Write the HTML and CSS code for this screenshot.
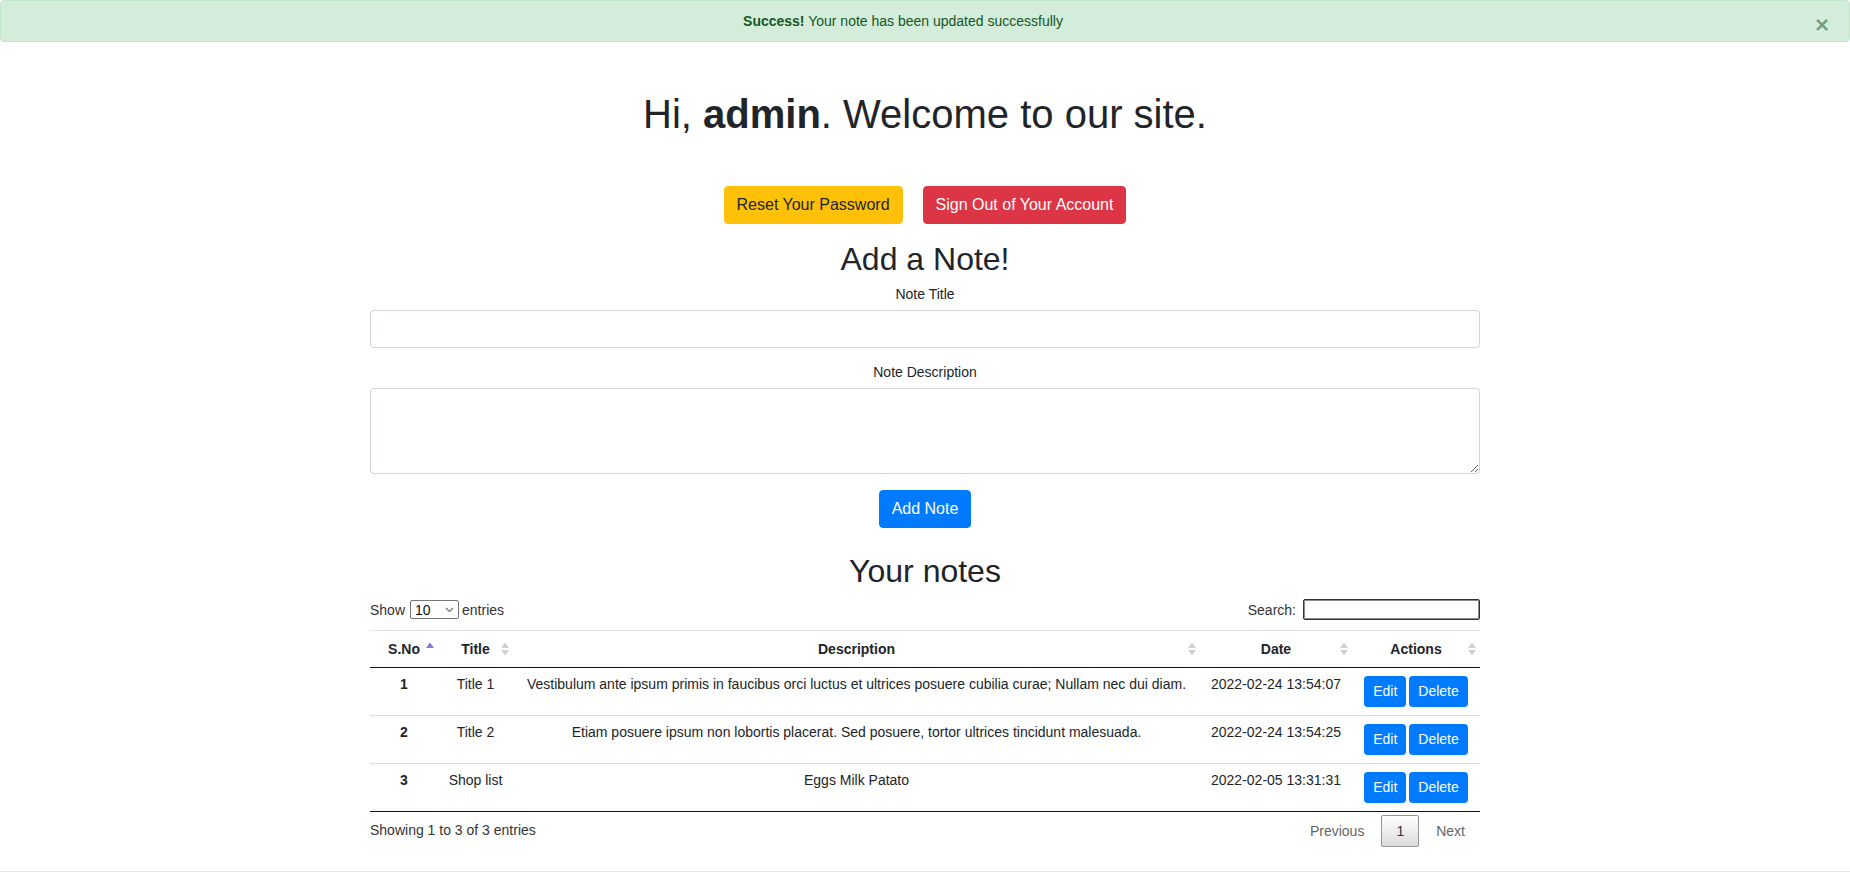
FILE: index.html
```html
<!DOCTYPE html>
<html lang="en">
<head>
<meta charset="utf-8">
<title>Welcome</title>
<link rel="stylesheet" href="styles.css">
</head>
<body>
<div class="alert">
  <strong>Success!</strong> Your note has been updated successfully
  <button type="button" class="close" aria-label="Close">&times;</button>
</div>

<h1 class="greeting">Hi, <b>admin</b>. Welcome to our site.</h1>

<div class="actions">
  <a href="#" class="btn btn-warning">Reset Your Password</a>
  <a href="#" class="btn btn-danger">Sign Out of Your Account</a>
</div>

<div class="container">
  <h2>Add a Note!</h2>
  <form>
    <div class="form-group">
      <label for="title">Note Title</label>
      <input type="text" class="form-control" id="title" name="title">
    </div>
    <div class="form-group">
      <label for="desc">Note Description</label>
      <textarea class="form-control" id="desc" name="description" rows="3"></textarea>
    </div>
    <div class="form-submit">
      <button type="button" class="btn btn-primary">Add Note</button>
    </div>
  </form>
</div>

<div class="container notes">
  <h2>Your notes</h2>
  <div class="dt-top">
    <label class="dt-length"><span>Show</span><span class="select-wrap"><select><option>10</option><option>25</option><option>50</option><option>100</option></select><svg class="chev" width="9" height="6" viewBox="0 0 9 6"><path d="M1 1 L4.5 4.5 L8 1" /></svg></span><span>entries</span></label>
    <label class="dt-filter">Search:<input type="search"></label>
  </div>
  <table class="dt">
    <thead>
      <tr>
        <th class="c-no">S.No<svg class="sort" width="8" height="13" viewBox="0 0 8 13"><path d="M0 5.6 L4 0 L8 5.6Z" class="asc"/></svg></th>
        <th class="c-title">Title<svg class="sort" width="8" height="13" viewBox="0 0 8 13"><path d="M0 5.6 L4 0 L8 5.6Z"/><path d="M0 7.4 L4 13 L8 7.4Z"/></svg></th>
        <th class="c-desc">Description<svg class="sort" width="8" height="13" viewBox="0 0 8 13"><path d="M0 5.6 L4 0 L8 5.6Z"/><path d="M0 7.4 L4 13 L8 7.4Z"/></svg></th>
        <th class="c-date">Date<svg class="sort" width="8" height="13" viewBox="0 0 8 13"><path d="M0 5.6 L4 0 L8 5.6Z"/><path d="M0 7.4 L4 13 L8 7.4Z"/></svg></th>
        <th class="c-act">Actions<svg class="sort" width="8" height="13" viewBox="0 0 8 13"><path d="M0 5.6 L4 0 L8 5.6Z"/><path d="M0 7.4 L4 13 L8 7.4Z"/></svg></th>
      </tr>
    </thead>
    <tbody>
      <tr>
        <th scope="row">1</th>
        <td>Title 1</td>
        <td class="nowrap">Vestibulum ante ipsum primis in faucibus orci luctus et ultrices posuere cubilia curae; Nullam nec dui diam.</td>
        <td class="nowrap">2022-02-24 13:54:07</td>
        <td><div class="row-actions"><button type="button" class="btn btn-sm btn-primary">Edit</button><button type="button" class="btn btn-sm btn-primary">Delete</button></div></td>
      </tr>
      <tr>
        <th scope="row">2</th>
        <td>Title 2</td>
        <td class="nowrap">Etiam posuere ipsum non lobortis placerat. Sed posuere, tortor ultrices tincidunt malesuada.</td>
        <td class="nowrap">2022-02-24 13:54:25</td>
        <td><div class="row-actions"><button type="button" class="btn btn-sm btn-primary">Edit</button><button type="button" class="btn btn-sm btn-primary">Delete</button></div></td>
      </tr>
      <tr>
        <th scope="row">3</th>
        <td>Shop list</td>
        <td class="nowrap">Eggs Milk Patato</td>
        <td class="nowrap">2022-02-05 13:31:31</td>
        <td><div class="row-actions"><button type="button" class="btn btn-sm btn-primary">Edit</button><button type="button" class="btn btn-sm btn-primary">Delete</button></div></td>
      </tr>
    </tbody>
  </table>
  <div class="dt-bottom">
    <div class="dt-info">Showing 1 to 3 of 3 entries</div>
    <div class="dt-paginate">
      <span class="page-btn disabled">Previous</span>
      <span class="page-btn current">1</span>
      <span class="page-btn disabled">Next</span>
    </div>
  </div>
</div>
<div class="page-end"></div>
</body>
</html>
```
FILE: styles.css
```css
*, *::before, *::after { box-sizing: border-box; }
html, body { margin: 0; padding: 0; }
body {
  font: 14px "Liberation Sans", Arial, sans-serif;
  text-align: center;
  color: #212529;
  background: #fff;
}

/* alert */
.alert {
  position: relative;
  padding: 12px 64px 12px 20px;
  margin-bottom: 16px;
  border: 1px solid #c3e6cb;
  border-radius: 4px;
  background: #d4edda;
  color: #155724;
}
.alert strong { font-weight: 700; }
.alert .close {
  position: absolute;
  top: 0;
  right: 0;
  padding: 12px 20px;
  margin: 0;
  font-family: "Liberation Sans", Arial, sans-serif;
  font-size: 24px;
  font-weight: 700;
  line-height: 1;
  color: inherit;
  opacity: .5;
  background: transparent;
  border: 0;
  text-shadow: 0 1px 0 #fff;
  cursor: pointer;
}

/* headings */
.greeting {
  font-size: 40px;
  font-weight: 500;
  line-height: 1.2;
  margin: 48px 0;
}
.greeting b { font-weight: 700; }
h2 {
  font-size: 32px;
  font-weight: 500;
  line-height: 1.2;
  margin: 0 0 8px;
}

/* buttons */
.actions {
  display: flex;
  justify-content: center;
  gap: 20px;
  margin: 0 0 16px;
}
.btn {
  display: inline-block;
  font-family: inherit;
  font-weight: 400;
  text-align: center;
  border: 1px solid transparent;
  padding: 6px 12px;
  font-size: 16px;
  line-height: 1.5;
  border-radius: 4px;
  text-decoration: none;
  cursor: pointer;
  margin: 0;
}
.btn-warning { background: #ffc107; border-color: #ffc107; color: #212529; }
.btn-danger { background: #dc3545; border-color: #dc3545; color: #fff; }
.btn-primary { background: #007bff; border-color: #007bff; color: #fff; }
.btn-sm {
  padding: 4px 8px;
  font-size: 14px;
  line-height: 1.5;
  border-radius: 3.2px;
}

/* layout */
.container {
  width: 1140px;
  padding: 0 15px;
  margin: 0 auto;
}
.notes { margin-top: 24px; margin-bottom: 24px; }

/* form */
form { margin: 0; }
.form-group { margin-bottom: 16px; }
.form-group label {
  display: block;
  margin-bottom: 8px;
  line-height: 16px;
}
.form-control {
  display: block;
  width: 100%;
  height: 38px;
  padding: 6px 12px;
  font-family: inherit;
  font-size: 16px;
  line-height: 1.5;
  color: #495057;
  background: #fff;
  border: 1px solid #ced4da;
  border-radius: 4px;
  margin: 0;
}
textarea.form-control { height: auto; resize: vertical; overflow: auto; }
.form-submit { display: flex; justify-content: center; }

/* datatable controls */
.dt-top {
  display: flex;
  justify-content: space-between;
  align-items: center;
  height: 22px;
  margin-bottom: 9px;
  color: #333;
}
.dt-length {
  display: flex;
  align-items: center;
  line-height: 16px;
}
.select-wrap {
  position: relative;
  display: block;
  margin: 0 3px 0 5px;
}
.dt-length select {
  -webkit-appearance: none;
  appearance: none;
  display: block;
  font-family: inherit;
  font-size: 14px;
  line-height: 16px;
  width: 49px;
  height: 19px;
  margin: 0;
  padding: 0 0 0 4px;
  border: 1px solid #767676;
  border-radius: 2px;
  background: #fff;
  color: #111;
}
.chev {
  position: absolute;
  right: 5px;
  top: 7px;
  fill: none;
  stroke: #6d6d6d;
  stroke-width: 1.2;
  pointer-events: none;
}
.dt-filter {
  display: flex;
  align-items: center;
  line-height: 16px;
}
.dt-filter input {
  font-family: inherit;
  font-size: 14px;
  width: 177px;
  height: 21px;
  margin: 0 0 0 7px;
  border: 1px solid #333;
  box-shadow: inset 0 0 0 1px #8a8a8a;
  border-radius: 2px;
  padding: 1px 3px;
  background: #fff;
}

/* table */
table.dt {
  width: 100%;
  table-layout: fixed;
  border-collapse: separate;
  border-spacing: 0;
  border-bottom: 1px solid #111;
}
table.dt thead th {
  position: relative;
  padding: 10px;
  line-height: 16px;
  font-weight: 700;
  text-align: center;
  border-top: 1px solid #dee2e6;
  border-bottom: 1px solid #111;
}
table.dt tbody th,
table.dt tbody td {
  padding: 8px 10px;
  line-height: 16px;
  vertical-align: top;
  text-align: center;
  border-top: 1px solid #ddd;
}
table.dt tbody th { font-weight: 700; }
table.dt tbody tr:first-child th,
table.dt tbody tr:first-child td { border-top: none; }
.nowrap { white-space: nowrap; }

.c-no { width: 68px; }
.c-title { width: 75px; }
.c-desc { width: 687px; }
.c-date { width: 152px; }
.c-act { width: 128px; }

.sort {
  position: absolute;
  right: 4px;
  top: 50%;
  transform: translateY(-50%);
  fill: #d0d0d0;
}
.sort .asc { fill: #7d7ddb; }

.row-actions {
  display: flex;
  justify-content: center;
  gap: 3px;
}

/* bottom */
.dt-bottom {
  display: flex;
  justify-content: space-between;
  align-items: flex-start;
  color: #333;
}
.dt-info { padding-top: 10.5px; line-height: 16px; }
.dt-paginate { display: flex; padding-top: 3.5px; }
.page-btn {
  display: inline-block;
  padding: 7px 14px;
  margin-left: 2px;
  line-height: 16px;
  border: 1px solid transparent;
  border-radius: 2px;
  color: #666;
}
.page-btn.current {
  border-color: #979797;
  background: linear-gradient(to bottom, #fff 0%, #dcdcdc 100%);
  color: #333;
}

.page-end { border-top: 1px solid rgba(0, 0, 0, .1); }
```
